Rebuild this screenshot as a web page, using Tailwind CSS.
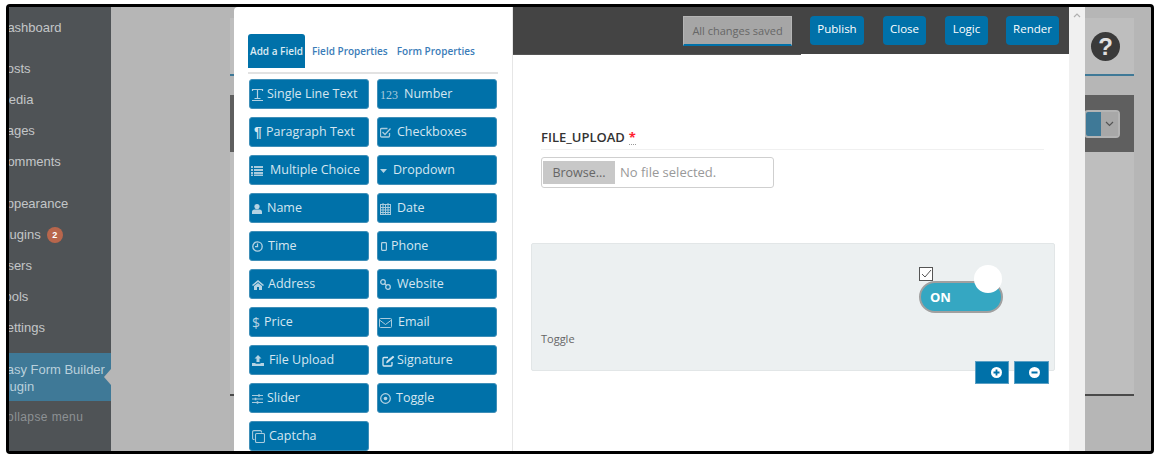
<!DOCTYPE html>
<html lang="en">
<head>
    <meta charset="UTF-8">
    <title>Easy Form Builder</title>
    <script src="https://cdn.jsdelivr.net/npm/@tailwindcss/browser@4"></script>
</head>
<body class="bg-white w-[1160px] h-[458px] overflow-hidden pt-[4px] pb-[4px] px-[6px] font-['Open_Sans',sans-serif]">
    <!-- Window frame -->
    <div class="relative flex w-[1148px] h-[450px] border-[3px] border-black rounded-[4px] overflow-hidden bg-[#b6b6b6]">
        <!-- WP sidebar, scrolled off to the left -->
        <aside class="w-[102px] shrink-0 bg-[#4f5356] text-[#c3c6c8] text-[13px] leading-[20px] font-['Liberation_Sans',sans-serif] overflow-hidden">
            <div class="ml-[-11px] pt-[11px] h-[51px]">Dashboard</div>
            <div class="ml-[-11px] h-[31px] pt-[1px]">Posts</div>
            <div class="ml-[-11px] h-[31px] pt-[1px]">Media</div>
            <div class="ml-[-11px] h-[31px] pt-[1px]">Pages</div>
            <div class="ml-[-11px] h-[41px] pt-[1px]">Comments</div>
            <div class="ml-[-11px] h-[31px] pt-[2px]">Appearance</div>
            <div class="ml-[-11px] h-[31px] pt-[2px] flex items-start gap-[6px]">Plugins
                <span class="mt-[2px] w-[16px] h-[16px] rounded-full bg-[#b8664c] text-white text-[9px] font-bold leading-[16px] text-center">2</span>
            </div>
            <div class="ml-[-11px] h-[31px] pt-[2px]">Users</div>
            <div class="ml-[-11px] h-[31px] pt-[2px]">Tools</div>
            <div class="ml-[-11px] h-[37px] pt-[2px]">Settings</div>
            <div class="relative h-[48px] bg-[#3f7997] text-[#b9d0dc] leading-[17px] pt-[8px]">
                <div class="ml-[-11px] whitespace-nowrap">Easy Form Builder</div>
                <div class="ml-[-11px]">Plugin</div>
                <div class="absolute right-0 top-[16px] w-0 h-0 border-y-[8px] border-y-transparent border-r-[7px] border-r-[#b6b6b6]"></div>
            </div>
            <div class="ml-[-11px] mt-[6px] text-[12px] tracking-[0.4px] text-[#8d9194] whitespace-nowrap">Collapse menu</div>
        </aside>

        <!-- Dimmed page behind the dialog -->
        <main class="flex-1 pt-[11px] pl-[119px] pr-[17px]">
            <div class="h-[58px] bg-[#bebebe] border-b-[2px] border-[#3f7997] flex justify-end items-center pr-[14px]">
                <div class="w-[29px] h-[29px] rounded-full bg-[#3a3a3a] text-[#e0e0e0] text-[24px] font-['Liberation_Sans',sans-serif] font-bold leading-[29px] text-center">?</div>
            </div>
            <div class="mt-[19px] h-[57px] bg-[#5f5f5f] flex justify-end items-start pt-[15px] pr-[14px]">
                <div class="w-[36px] h-[28px] rounded-[4px] border-[2px] border-[#b4b4b4] bg-[#3f7997] flex justify-end">
                    <div class="w-[17px] bg-[#a8a8a8] flex items-center justify-center">
                        <svg class="w-[9px] h-[6px]" viewBox="0 0 9 6" fill="none" stroke="#555" stroke-width="1.2"><path d="M1 1l3.5 3.5L8 1"/></svg>
                    </div>
                </div>
            </div>
            <div class="h-[244px] bg-[#bebebe] border-b-[2px] border-[#4a4a4a]"></div>
        </main>

        <!-- Dialog -->
        <div class="absolute left-[225px] top-0 w-[851px] h-[444px] bg-white flex rounded-tl-[4px]">
            <!-- Field palette -->
            <section class="w-[279px] shrink-0 border-r border-[#e6e6e6] pl-[14px] pr-[14px] pt-[27px]">
                <nav class="flex items-start h-[40px] border-b-[2px] border-[#e2e2e2] text-[10px] font-semibold">
                    <a class="w-[57px] h-[34px] pt-[1px] rounded-t-[3px] bg-[#0071a9] text-[#dcebf3] flex items-center justify-center whitespace-nowrap">Add a Field</a>
                    <a class="ml-[7px] h-[34px] pt-[1px] flex items-center text-[#3a7cb8] whitespace-nowrap">Field Properties</a>
                    <a class="ml-[9px] h-[34px] pt-[1px] flex items-center text-[#3a7cb8] whitespace-nowrap">Form Properties</a>
                </nav>
                <div class="grid grid-cols-[120px_120px] gap-x-[8px] gap-y-[8px] mt-[5px] ml-[1px] text-[#d5e6f0] text-[12.5px] font-medium [&>div]:h-[30px] [&>div]:rounded-[3px] [&>div]:bg-[#0071a9] [&>div]:border [&>div]:border-[#3f8fb8] [&>div]:flex [&>div]:items-center [&>div]:pl-[1px] [&>div]:pt-[1px] [&>div]:whitespace-nowrap">
                    <div>
                        <svg class="w-[13px] h-[13px] mr-[3px]" viewBox="0 0 13 13" fill="none" stroke="#b5d3e3" stroke-width="1.2"><path d="M1.5 3V1.5h10V3M6.5 1.5V10M3.5 10.5h6M1 12.5h11"/></svg>Single Line Text
                    </div>
                    <div>
                        <span class="ml-[1px] font-['Liberation_Serif',serif] font-normal text-[12px] text-[#a9cbdd] mr-[6px]">123</span>Number
                    </div>
                    <div>
                        <span class="w-[12px] ml-[3px] text-[14px] font-bold font-['Liberation_Sans',sans-serif] text-[#d5e6f0]">¶</span>Paragraph Text
                    </div>
                    <div>
                        <svg class="w-[11px] h-[11px] ml-[1px] mr-[6px]" viewBox="0 0 11 11" fill="none" stroke="#a9cbdd" stroke-width="1.3"><path d="M9.5 6v3a1 1 0 0 1-1 1h-7a1 1 0 0 1-1-1V2.500a1 1 0 0 1 1-1h6"/><path d="M2.500 5l2.500 2.500 5.500-6"/></svg>Checkboxes
                    </div>
                    <div>
                        <svg class="w-[12px] h-[10px] mr-[7px]" viewBox="0 0 12 10" fill="#a9cbdd"><path d="M0 0h2v2H0zM3 0h9v2H3zM0 3h2v2H0zM3 3h9v2H3zM0 6h2v2H0zM3 6h9v2H3z"/><path d="M0 8.500h2v1.500H0zM3 8.500h9v1.500H3z"/></svg>Multiple Choice
                    </div>
                    <div>
                        <svg class="w-[7px] h-[4px] ml-[1px] mr-[6px]" viewBox="0 0 7 4" fill="#b5d3e3"><path d="M0 0h7L3.500 4z"/></svg>Dropdown
                    </div>
                    <div>
                        <svg class="w-[10px] h-[10px] ml-[1px] mr-[5px]" viewBox="0 0 10 10" fill="#b5d3e3"><circle cx="5" cy="2.600" r="2.600"/><path d="M0 10V8a2.500 2.500 0 0 1 2.500-2.500h5A2.500 2.500 0 0 1 10 8v2z"/></svg>Name
                    </div>
                    <div>
                        <svg class="w-[11px] h-[12px] ml-[1px] mr-[6px]" viewBox="0 0 11 12" fill="none" stroke="#a9cbdd"><rect x=".5" y="1.500" width="10" height="10"/><path d="M.5 4.500h10M.5 7h10M.5 9.500h10M3 1.500v10M5.500 1.500v10M8 1.500v10M3 0v2M8 0v2"/></svg>Date
                    </div>
                    <div>
                        <svg class="w-[11px] h-[11px] ml-[1px] mr-[5px]" viewBox="0 0 11 11" fill="none" stroke="#b5d3e3" stroke-width="1.3"><circle cx="5.500" cy="5.500" r="4.700"/><path d="M5.500 2.500v3.200H3"/></svg>Time
                    </div>
                    <div>
                        <svg class="w-[6px] h-[9px] ml-[2px] mr-[4px]" viewBox="0 0 6 9" fill="none" stroke="#b5d3e3" stroke-width="1.200"><rect x=".6" y=".6" width="4.800" height="7.800" rx=".8"/></svg>Phone
                    </div>
                    <div>
                        <svg class="w-[12px] h-[10px] ml-[1px] mr-[4px]" viewBox="0 0 12 10" fill="#b5d3e3"><path d="M6 0l6 5-1 1-5-4-5 4-1-1z"/><path d="M2 6l4-3 4 3v4H7V7H5v3H2z"/></svg>Address
                    </div>
                    <div>
                        <svg class="w-[11px] h-[11px] ml-[1px] mr-[6px]" viewBox="0 0 11 11" fill="none" stroke="#b5d3e3" stroke-width="1.300"><circle cx="3" cy="3" r="2.300"/><circle cx="8" cy="8" r="2.300"/><path d="M4.500 4.500l2 2"/></svg>Website
                    </div>
                    <div>
                        <span class="w-[8px] ml-[1px] mr-[4px] text-[#b5d3e3] text-[14px]">$</span>Price
                    </div>
                    <div>
                        <svg class="w-[13px] h-[10px] mr-[6px]" viewBox="0 0 13 10" fill="none" stroke="#a9cbdd" stroke-width="1"><rect x=".5" y=".5" width="12" height="9" rx="1"/><path d="M.5 2l6 4.500 6-4.500"/></svg>Email
                    </div>
                    <div>
                        <svg class="w-[12px] h-[11px] ml-[1px] mr-[5px]" viewBox="0 0 12 11" fill="#b5d3e3"><path d="M6 0l3.500 3.500H7.500V7h-3V3.500H2.500z"/><path d="M0 8h3.500v.8h5V8H12v3H0z"/></svg>File Upload
                    </div>
                    <div>
                        <svg class="w-[13px] h-[12px] ml-[3px] mr-[2px]" viewBox="0 0 13 12" fill="none" stroke="#d5e6f0" stroke-width="1.300"><path d="M10 7v3a1 1 0 0 1-1 1H2a1 1 0 0 1-1-1V3.500a1 1 0 0 1 1-1h4"/><path d="M4.500 8l.5-2 6-5 1 1.200-6 5z" fill="#d5e6f0" stroke-width=".6"/></svg>Signature
                    </div>
                    <div>
                        <svg class="w-[11px] h-[10px] ml-[1px] mr-[4px]" viewBox="0 0 11 10" fill="none" stroke="#a9cbdd" stroke-width="1"><path d="M0 1.500h11M0 5h11M0 8.500h11"/><path d="M7 .2v2.600M3.500 3.700v2.600M5.500 7.200v2.600" stroke-width="1.600"/></svg>Slider
                    </div>
                    <div>
                        <svg class="w-[11px] h-[11px] ml-[1px] mr-[5px]" viewBox="0 0 11 11" fill="none" stroke="#b5d3e3" stroke-width="1.200"><circle cx="5.500" cy="5.500" r="4.800"/><circle cx="5.500" cy="5.500" r="1.800" fill="#b5d3e3" stroke="none"/></svg>Toggle
                    </div>
                    <div>
                        <svg class="w-[13px] h-[13px] ml-[1px] mr-[4px]" viewBox="0 0 13 13" fill="none" stroke="#a9cbdd" stroke-width="1.100"><path d="M2.500 9.500H1.800a1.200 1.200 0 0 1-1.200-1.200V1.800A1.200 1.200 0 0 1 1.800.6h6.500a1.200 1.200 0 0 1 1.200 1.200v.7"/><rect x="3.500" y="3.500" width="9" height="9" rx="1.200"/></svg>Captcha
                    </div>
                </div>
            </section>

            <!-- Stage -->
            <section class="flex-1 min-w-0 flex flex-col">
                <header class="h-[47px] shrink-0 bg-[#444444] flex items-start pt-[9px] pl-[170px] text-[11.5px] text-white gap-[19px] [&>button]:h-[29px] [&>button]:rounded-[4px] [&>button]:bg-[#0071a9] [&>button]:pb-[3px]">
                    <div class="w-[109px] h-[30px] mr-[-1px] bg-[#a6a6a6] border border-[#b5b5b5] border-b-[2px] border-b-[#0071a9] text-[11px] text-[#666] text-center leading-[28px] whitespace-nowrap">All changes saved</div>
                    <button class="w-[54px]">Publish</button>
                    <button class="w-[43px]">Close</button>
                    <button class="w-[43px]">Logic</button>
                    <button class="w-[53px] ml-[-1px]">Render</button>
                </header>
                <div class="w-[288px] h-[1px] bg-[#555]"></div>

                <div class="pl-[28px] pr-[25px] pt-[73px]">
                    <label class="flex items-start h-[22px] border-b border-[#f0f0f0] text-[13px] font-semibold text-[#333] leading-[18px]">FILE_UPLOAD
                        <span class="ml-[4px] text-[#ff2030] font-bold border-b border-dotted border-[#999] h-[17px]">*</span>
                    </label>
                    <div class="mt-[7px] w-[233px] h-[31px] border border-[#cfcfcf] rounded-[3px] flex items-center pl-[1px] text-[13px] text-[#999]">
                        <span class="w-[72px] h-[23px] bg-[#c8c8c8] text-[12.5px] text-[#666] text-center leading-[23px]">Browse...</span>
                        <span class="ml-[5px]">No file selected.</span>
                    </div>
                </div>

                <!-- Toggle field -->
                <div class="relative mt-[55px] ml-[18px] w-[524px] h-[128px] bg-[#ecf0f1] border border-[#e2e6e7] rounded-[2px]">
                    <svg class="absolute left-[387px] top-[23px] w-[14px] h-[14px]" viewBox="0 0 14 14" fill="white" stroke="#555" stroke-width="1"><rect x=".5" y=".5" width="13" height="13"/><path d="M3 7l3 3 6-7" fill="none"/></svg>
                    <div class="absolute left-[387px] top-[37px] w-[84px] h-[32px] rounded-full bg-[#35a7c2] border-[2px] border-[#a0a0a0] text-white text-[13px] font-bold leading-[28px] pl-[9px]">ON</div>
                    <div class="absolute left-[442px] top-[21px] w-[28px] h-[28px] rounded-full bg-white"></div>
                    <div class="absolute left-[9px] top-[87px] text-[11px] text-[#666]">Toggle</div>
                    <div class="absolute left-[443px] top-[117px] flex gap-[5px]">
                        <div class="w-[34px] h-[23px] bg-[#0071a9] border border-[#5a9fc4] flex items-center justify-end pr-[6px]">
                            <svg class="w-[11px] h-[11px]" viewBox="0 0 11 11"><circle cx="5.500" cy="5.500" r="5.500" fill="white"/><path d="M5.500 2.500v6M2.500 5.500h6" stroke="#0071a9" stroke-width="1.800"/></svg>
                        </div>
                        <div class="w-[35px] h-[23px] bg-[#0071a9] border border-[#5a9fc4] flex items-center justify-end pr-[8px]">
                            <svg class="w-[11px] h-[11px]" viewBox="0 0 11 11"><circle cx="5.500" cy="5.500" r="5.500" fill="white"/><path d="M2.500 5.500h6" stroke="#0071a9" stroke-width="1.800"/></svg>
                        </div>
                    </div>
                </div>
            </section>

            <!-- Scrollbar -->
            <div class="w-[16px] shrink-0 bg-[#f0f0f0] flex justify-center pt-[6px]">
                <svg class="w-[8px] h-[5px]" viewBox="0 0 8 5" fill="none" stroke="#b0b0b0" stroke-width="1.200"><path d="M1 4l3-3 3 3"/></svg>
            </div>
        </div>
    </div>
</body>
</html>
